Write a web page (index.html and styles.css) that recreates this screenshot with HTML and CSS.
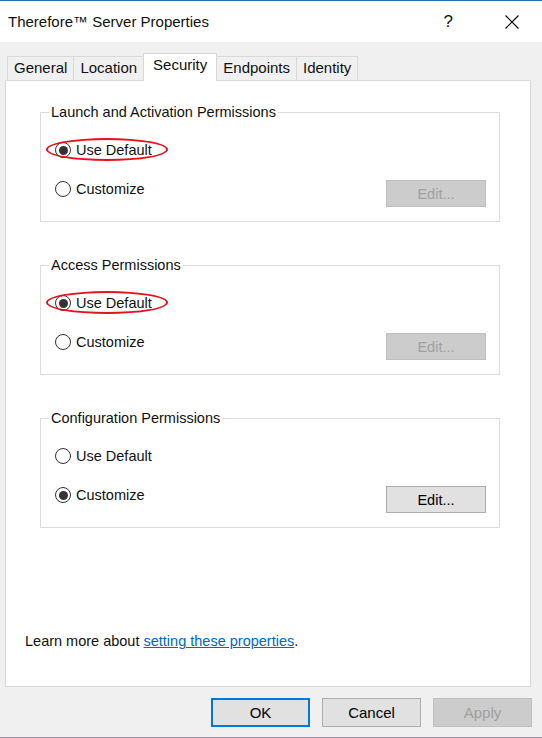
FILE: index.html
```html
<!DOCTYPE html>
<html lang="en">
<head>
<meta charset="utf-8">
<title>Therefore™ Server Properties</title>
<link rel="stylesheet" href="styles.css">
</head>
<body>
<div class="window">
  <div class="titlebar">
    <span class="title">Therefore™ Server Properties</span>
    <span class="help">?</span>
    <svg class="close" width="14" height="14" viewBox="0 0 14 14"><path d="M0.5 0.5 L13.5 13.5 M13.5 0.5 L0.5 13.5" stroke="#000" stroke-width="1.1" fill="none"/></svg>
  </div>
  <div class="body">
    <div class="tabs">
      <div class="tab">General</div>
      <div class="tab">Location</div>
      <div class="tab active">Security</div>
      <div class="tab">Endpoints</div>
      <div class="tab">Identity</div>
    </div>
    <div class="panel">
      <fieldset class="group">
        <legend>Launch and Activation Permissions</legend>
        <div class="row">
          <span class="radio checked"></span><span class="label">Use Default</span>
          <span class="mark"></span>
        </div>
        <div class="row row-edit">
          <span class="radio"></span><span class="label">Customize</span>
          <button class="edit" disabled>Edit...</button>
        </div>
      </fieldset>
      <fieldset class="group">
        <legend>Access Permissions</legend>
        <div class="row">
          <span class="radio checked"></span><span class="label">Use Default</span>
          <span class="mark"></span>
        </div>
        <div class="row row-edit">
          <span class="radio"></span><span class="label">Customize</span>
          <button class="edit" disabled>Edit...</button>
        </div>
      </fieldset>
      <fieldset class="group">
        <legend>Configuration Permissions</legend>
        <div class="row">
          <span class="radio"></span><span class="label">Use Default</span>
        </div>
        <div class="row row-edit">
          <span class="radio checked"></span><span class="label">Customize</span>
          <button class="edit">Edit...</button>
        </div>
      </fieldset>
      <p class="learn">Learn more about <a href="#">setting these properties</a>.</p>
    </div>
    <div class="buttons">
      <button class="btn default">OK</button>
      <button class="btn">Cancel</button>
      <button class="btn" disabled>Apply</button>
    </div>
  </div>
</div>
</body>
</html>
```
FILE: styles.css
```css
html, body {
  margin: 0;
  padding: 0;
  background: #f0f0f0;
}
body {
  font-family: "Liberation Sans", Arial, sans-serif;
  font-size: 14.5px;
  color: #111;
}
.window {
  width: 542px;
  height: 738px;
  box-sizing: border-box;
  border-top: 1px solid #2a6ebb;
  border-bottom: 1px solid #68a1d8;
  display: flex;
  flex-direction: column;
  overflow: hidden;
}
.titlebar {
  height: 41px;
  background: #fff;
  display: flex;
  align-items: center;
  padding-left: 8px;
}
.title {
  flex: 1;
  font-size: 15px;
  line-height: 18px;
}
.help {
  font-size: 17px;
  margin-right: 52px;
  line-height: 18px;
}
.close {
  margin-right: 23px;
  display: block;
}
.body {
  flex: 1;
  display: flex;
  flex-direction: column;
  padding: 11px 0 0 5px;
}
.tabs {
  height: 27px;
  display: flex;
  align-items: flex-end;
  padding-left: 2px;
}
.tab {
  height: 24px;
  box-sizing: border-box;
  border: 1px solid #d9d9d9;
  border-bottom: none;
  background: #f0f0f0;
  padding: 0 6px;
  font-size: 15px;
  line-height: 22px;
  margin-left: -1px;
}
.tab:first-child {
  margin-left: 0;
}
.tab.active {
  height: 28px;
  margin-bottom: -1px;
  padding: 0 9px 4px;
  background: #fff;
  line-height: 22px;
  position: relative;
  z-index: 1;
}
.panel {
  width: 526px;
  height: 607px;
  box-sizing: border-box;
  background: #fff;
  border: 1px solid #d9d9d9;
  display: flex;
  flex-direction: column;
  padding-top: 22px;
}
.group {
  margin: 0 0 34px 34px;
  width: 460px;
  height: 119px;
  box-sizing: border-box;
  border: 1px solid #dcdcdc;
  padding: 0 13px 0 14px;
}
.group legend {
  line-height: 18px;
  padding: 0 2px;
  margin-left: -6px;
}
.row {
  display: flex;
  align-items: center;
  height: 20px;
  margin-top: 19px;
  position: relative;
}
.row-edit {
  align-items: flex-start;
  height: 28px;
  margin-top: 19px;
}
.row-edit .radio, .row-edit .label {
  margin-top: 2px;
}
.radio {
  width: 16px;
  height: 16px;
  box-sizing: border-box;
  border: 1px solid #333;
  border-radius: 50%;
  background: #fff;
  display: flex;
  align-items: center;
  justify-content: center;
  flex-shrink: 0;
}
.radio.checked::after {
  content: "";
  width: 9px;
  height: 9px;
  border-radius: 50%;
  background: #333;
}
.label {
  margin-left: 5px;
  line-height: 16px;
}
.mark {
  position: absolute;
  left: -9px;
  top: -2px;
  width: 122px;
  height: 23px;
  box-sizing: border-box;
  border: 2px solid #e3141b;
  border-radius: 50%;
}
.edit {
  margin-left: auto;
  margin-top: 1px;
  width: 100px;
  height: 27px;
  box-sizing: border-box;
  border: 1px solid #adadad;
  background: #e1e1e1;
  font-family: inherit;
  font-size: 14.5px;
  color: #000;
  padding: 0;
}
.edit:disabled {
  background: #cccccc;
  border-color: #bfbfbf;
  color: #a0a0a0;
}
.learn {
  margin: auto 0 36px 19px;
  line-height: 18px;
}
.learn a {
  color: #0066cc;
  text-decoration: underline;
}
.buttons {
  display: flex;
  justify-content: flex-end;
  gap: 12px;
  margin-top: 11px;
  padding-right: 10px;
}
.btn {
  width: 99px;
  height: 29px;
  box-sizing: border-box;
  border: 1px solid #adadad;
  background: #e1e1e1;
  font-family: inherit;
  font-size: 15px;
  color: #000;
  padding: 0;
}
.btn.default {
  border: 2px solid #0078d7;
}
.btn:disabled {
  background: #cccccc;
  border-color: #bfbfbf;
  color: #a0a0a0;
}
```
